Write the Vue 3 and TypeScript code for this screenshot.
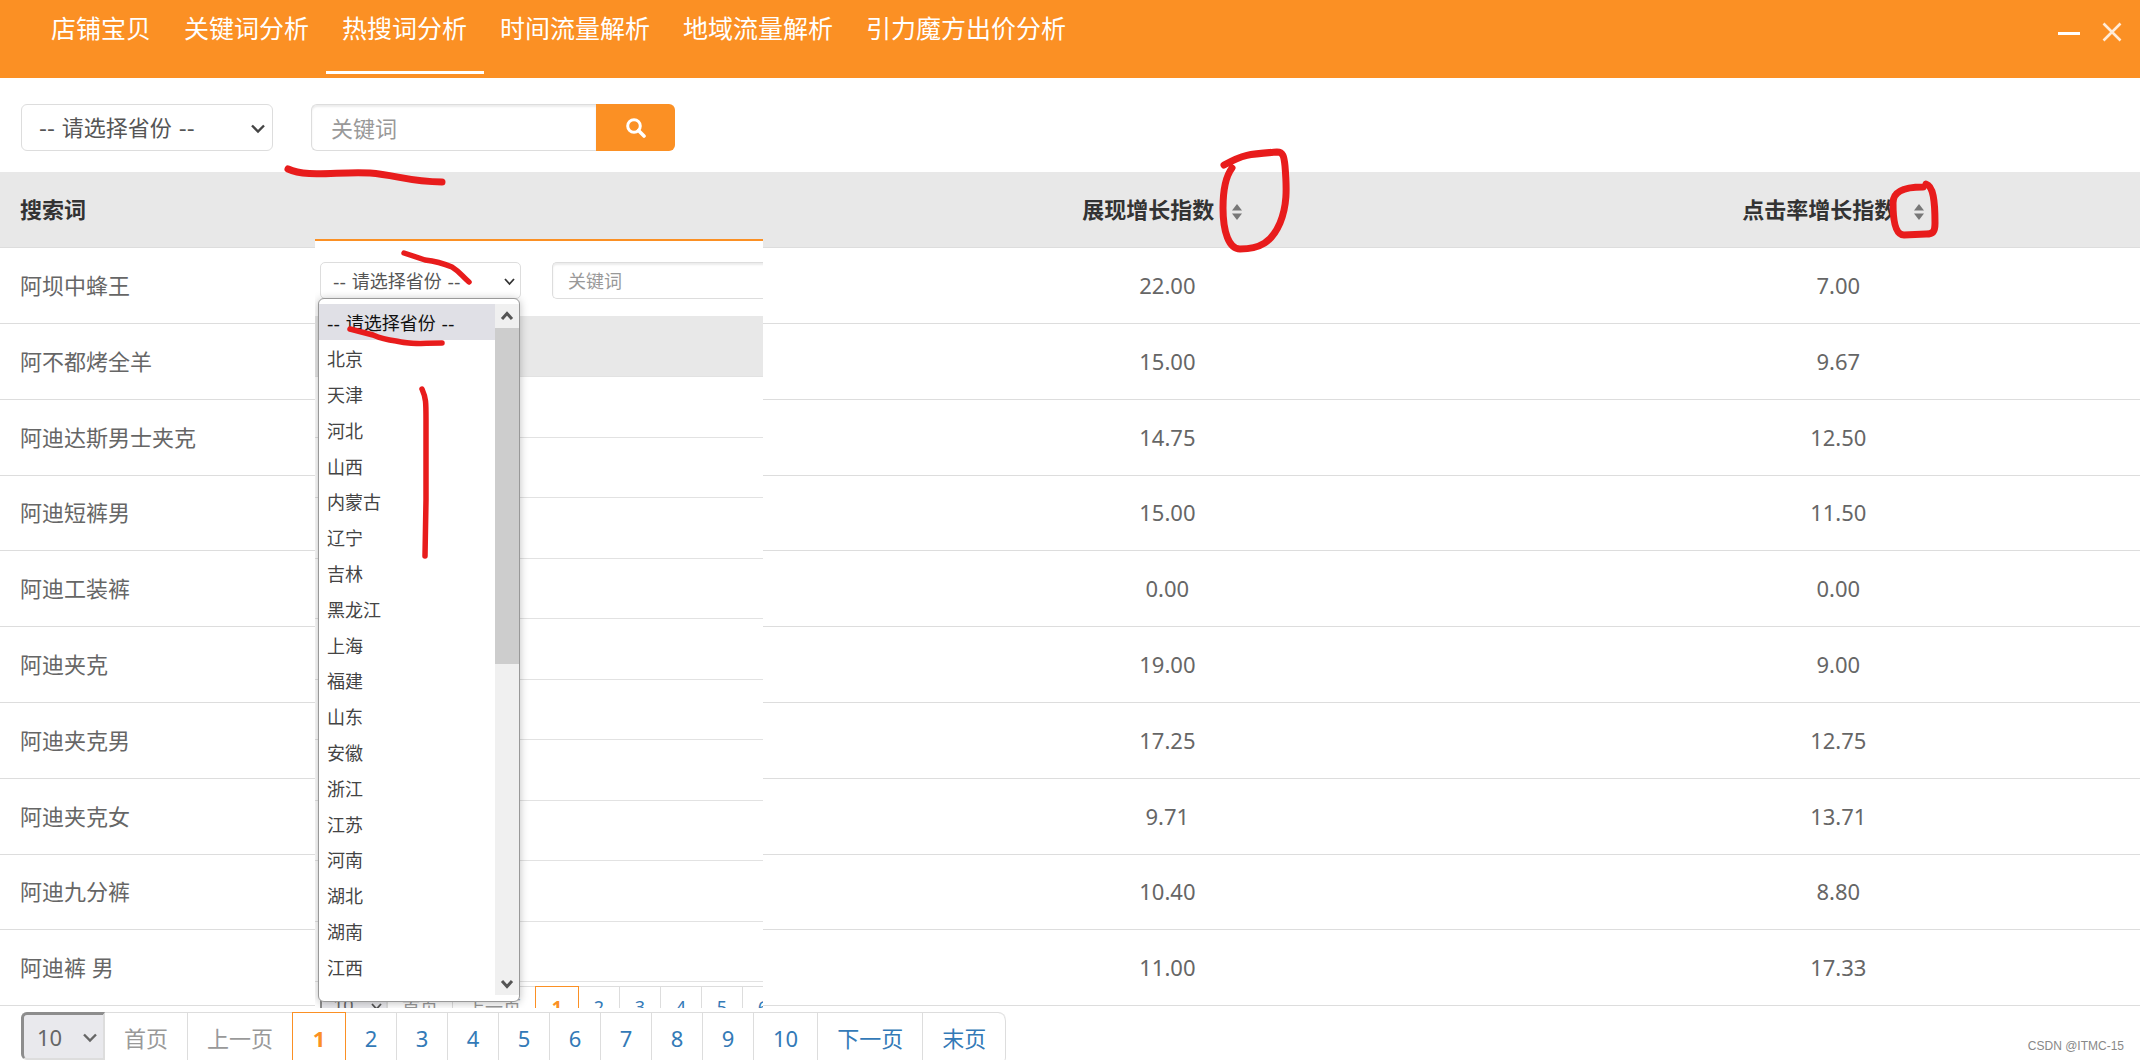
<script setup lang="ts">
import { ref } from 'vue'

interface HotWord {
  word: string
  impression: string
  click: string
}

const tabs: string[] = ['店铺宝贝', '关键词分析', '热搜词分析', '时间流量解析', '地域流量解析', '引力魔方出价分析']
const activeTab = ref('热搜词分析')

const rows: HotWord[] = [
  { word: '阿坝中蜂王', impression: '22.00', click: '7.00' },
  { word: '阿不都烤全羊', impression: '15.00', click: '9.67' },
  { word: '阿迪达斯男士夹克', impression: '14.75', click: '12.50' },
  { word: '阿迪短裤男', impression: '15.00', click: '11.50' },
  { word: '阿迪工装裤', impression: '0.00', click: '0.00' },
  { word: '阿迪夹克', impression: '19.00', click: '9.00' },
  { word: '阿迪夹克男', impression: '17.25', click: '12.75' },
  { word: '阿迪夹克女', impression: '9.71', click: '13.71' },
  { word: '阿迪九分裤', impression: '10.40', click: '8.80' },
  { word: '阿迪裤 男', impression: '11.00', click: '17.33' },
]

const provinces: string[] = [
  '-- 请选择省份 --', '北京', '天津', '河北', '山西', '内蒙古', '辽宁', '吉林', '黑龙江', '上海',
  '福建', '山东', '安徽', '浙江', '江苏', '河南', '湖北', '湖南', '江西', '广东',
]

const pages: number[] = [1, 2, 3, 4, 5, 6, 7, 8, 9, 10]
const province = ref(provinces[0])
const innerProvince = ref(provinces[0])
const keyword = ref('')
const innerKeyword = ref('')
const page = ref(1)
const pageSize = ref('10')
</script>

<template>
  <div class="page">
    <header class="topbar">
      <nav class="tabs">
        <a
          v-for="tab in tabs"
          :key="tab"
          href="#"
          class="tab"
          :class="{ active: tab === activeTab }"
          @click.prevent="activeTab = tab"
        >{{ tab }}</a>
      </nav>
      <div class="window-actions">
        <button type="button" aria-label="最小化">
          <svg width="22" height="20" viewBox="0 0 22 20"><path d="M0 11.5H22" stroke="#fff" stroke-width="3" /></svg>
        </button>
        <button type="button" aria-label="关闭">
          <svg width="20" height="20" viewBox="0 0 20 20"><path d="M1.5 1.5L18.5 18.5M18.5 1.5L1.5 18.5" stroke="#ffecd8" stroke-width="2.6" /></svg>
        </button>
      </div>
    </header>

    <form class="filters" @submit.prevent>
      <div class="select-wrap">
        <select v-model="province" class="province" aria-label="省份">
          <option v-for="p in provinces" :key="p">{{ p }}</option>
        </select>
        <svg class="chevron" width="14" height="10" viewBox="0 0 14 10"><path d="M1 1.5L7 7.5L13 1.5" fill="none" stroke="#444" stroke-width="2.4" /></svg>
      </div>
      <div class="search">
        <input v-model="keyword" type="text" placeholder="关键词" aria-label="关键词" />
        <button type="submit" aria-label="搜索">
          <svg width="20" height="20" viewBox="0 0 20 20">
            <circle cx="8" cy="8" r="6.3" fill="none" stroke="#fff" stroke-width="3" />
            <path d="M12.5 12.5L18 18" stroke="#fff" stroke-width="3.6" stroke-linecap="round" />
          </svg>
        </button>
      </div>
    </form>

    <table class="data">
      <colgroup>
        <col class="col-word" />
        <col class="col-impression" />
        <col class="col-click" />
      </colgroup>
      <thead>
        <tr>
          <th class="word">搜索词</th>
          <th v-for="title in ['展现增长指数', '点击率增长指数']" :key="title">
            <span class="sortable">
              {{ title }}
              <svg width="10" height="22" viewBox="0 0 10 22">
                <path d="M5 6L10 12.5H0Z" fill="#777" />
                <path d="M0 15.5H10L5 22Z" fill="#777" />
              </svg>
            </span>
          </th>
        </tr>
      </thead>
      <tbody>
        <tr v-for="row in rows" :key="row.word">
          <td class="word">{{ row.word }}</td>
          <td>{{ row.impression }}</td>
          <td>{{ row.click }}</td>
        </tr>
      </tbody>
    </table>

    <nav class="pager" aria-label="分页">
      <div class="select-wrap">
        <select v-model="pageSize" class="size" aria-label="每页条数">
          <option>10</option>
          <option>20</option>
        </select>
        <svg class="chevron" width="14" height="10" viewBox="0 0 14 10"><path d="M1 1.5L7 7.5L13 1.5" fill="none" stroke="#666" stroke-width="2.4" /></svg>
      </div>
      <a href="#" class="muted">首页</a>
      <a href="#" class="muted">上一页</a>
      <a
        v-for="n in pages"
        :key="n"
        href="#"
        :class="{ digit: n < 10, current: n === page }"
        @click.prevent="page = n"
      >{{ n }}</a>
      <a href="#">下一页</a>
      <a href="#" class="last">末页</a>
    </nav>

    <section class="inset">
      <div class="filters">
        <div class="select-wrap">
          <select v-model="innerProvince" class="province" aria-label="省份">
            <option v-for="p in provinces" :key="p">{{ p }}</option>
          </select>
          <svg class="chevron" width="11" height="8" viewBox="0 0 11 8"><path d="M1 1L5.5 6L10 1" fill="none" stroke="#333" stroke-width="1.8" /></svg>
        </div>
        <div class="search">
          <input v-model="innerKeyword" type="text" placeholder="关键词" aria-label="关键词" />
        </div>
      </div>
      <div class="lines">
        <div class="line head"></div>
        <div v-for="row in rows" :key="row.word" class="line"></div>
      </div>
      <div class="pager">
        <div class="select-wrap">
          <select v-model="pageSize" class="size" aria-label="每页条数">
            <option>10</option>
            <option>20</option>
          </select>
          <svg class="chevron" width="11" height="8" viewBox="0 0 11 8"><path d="M1 1L5.5 6L10 1" fill="none" stroke="#555" stroke-width="1.8" /></svg>
        </div>
        <a href="#" class="muted">首页</a>
        <a href="#" class="muted">上一页</a>
        <a
          v-for="n in pages.slice(0, 6)"
          :key="n"
          href="#"
          class="digit"
          :class="{ current: n === page }"
          @click.prevent="page = n"
        >{{ n }}</a>
      </div>

      <div class="dropdown">
        <ul role="listbox" aria-label="省份">
          <li
            v-for="p in provinces"
            :key="p"
            role="option"
            :aria-selected="p === innerProvince"
            :class="{ selected: p === innerProvince }"
            @click="innerProvince = p"
          >{{ p }}</li>
        </ul>
        <div class="scrollbar">
          <svg width="24" height="24" viewBox="0 0 24 24"><path d="M7 15L12 9.5L17 15" fill="none" stroke="#555" stroke-width="3" /></svg>
          <div class="thumb"></div>
          <svg width="24" height="24" viewBox="0 0 24 24"><path d="M7 10L12 15.5L17 10" fill="none" stroke="#555" stroke-width="3" /></svg>
        </div>
      </div>
    </section>

    <svg class="marks" viewBox="0 0 2140 1060" aria-hidden="true">
      <g fill="none" stroke="#e81c1c" stroke-linecap="round" stroke-linejoin="round">
        <path stroke-width="7" d="M288 169C306 178 340 171 370 173C396 175 410 182 442 182" />
        <path stroke-width="7" d="M1224 165C1244 154 1250 154 1277 152C1283 152 1284 156 1285 166C1287 190 1287 206 1280 223C1272 242 1260 249 1240 249C1229 249 1223 232 1223 208C1223 190 1226 176 1232 168" />
        <path stroke-width="7" d="M1923 187C1902 187 1893 192 1893 203C1893 226 1897 235 1904 235L1926 234C1933 234 1935 232 1935 223C1935 200 1933 186 1926 184" />
        <path stroke-width="5.5" d="M404 253L425 260C434 261 440 262 452 267C460 272 462 276 469 282" />
        <path stroke-width="5.5" d="M350 329L373 335C382 339 388 340 396 341C412 345 420 343 442 343" />
        <path stroke-width="5.5" d="M422 389C426 398 426 402 426 420V500L425 556" />
      </g>
    </svg>
    <p class="watermark">CSDN @ITMC-15</p>
  </div>
</template>

<style>
body {
  margin: 0;
  overflow: hidden;
}
</style>

<style scoped>
* {
  box-sizing: border-box;
}

.page {
  position: relative;
  height: 100vh;
  overflow: hidden;
  background: #fff;
  color: #666;
  font: 22px/32px 'Noto Sans', 'Noto Sans CJK SC', sans-serif;
}

a {
  text-decoration: none;
}

button,
select,
input {
  margin: 0;
  padding: 0;
  border: 0;
  background: none;
  color: inherit;
  font: inherit;
}

svg {
  display: block;
}

.topbar {
  display: flex;
  justify-content: space-between;
  height: 78px;
  padding: 0 18px 0 35px;
  background: #fb9024;
}

.tabs {
  display: flex;
}

.tab {
  height: 74px;
  padding: 12px 17px 0 16px;
  border-bottom: 3px solid transparent;
  color: #fff;
  font-size: 25px;
  white-space: nowrap;
}

.tab.active {
  border-bottom-color: #fff;
}

.window-actions {
  display: flex;
  gap: 22px;
  align-items: flex-start;
  padding-top: 22px;
}

.filters {
  display: flex;
  gap: 38px;
  padding: 26px 21px 21px;
}

.select-wrap {
  position: relative;
}

.province {
  appearance: none;
  display: block;
  width: 252px;
  height: 47px;
  padding: 2px 0 0 17px;
  border: 1px solid #ddd;
  border-radius: 6px;
  background: #fff;
  color: #555;
  font-family: 'DejaVu Sans', 'Noto Sans CJK SC', sans-serif;
}

.chevron {
  position: absolute;
  top: 20px;
  right: 8px;
  pointer-events: none;
}

.search {
  display: flex;
}

.search input {
  width: 285px;
  height: 47px;
  padding-left: 19px;
  border: 1px solid #ddd;
  border-right: 0;
  border-radius: 6px 0 0 6px;
  box-shadow: inset 0 2px 2px rgba(0, 0, 0, 0.08);
}

.search input::placeholder {
  color: #999;
}

.search button {
  display: flex;
  align-items: center;
  justify-content: center;
  width: 79px;
  height: 47px;
  border-radius: 0 6px 6px 0;
  background: #fb9024;
}

.data {
  width: 100%;
  border-spacing: 0;
  table-layout: fixed;
}

.col-word {
  width: 37.3%;
}

.col-impression {
  width: 34.5%;
}

.col-click {
  width: 28.2%;
}

.data tr {
  height: 76px;
}

.data tbody tr:nth-child(5n + 4) {
  height: 75px;
}

.data th,
.data td {
  padding: 0 0 2px;
  border-bottom: 1px solid #ddd;
  text-align: center;
}

.data th {
  background: #e8e8e8;
  color: #333;
}

.data .word {
  padding-left: 20px;
  text-align: left;
}

.sortable {
  display: inline-flex;
  gap: 18px;
  align-items: center;
  padding-right: 10px;
}

.pager {
  display: flex;
  width: max-content;
  margin: 6px 0 0 21px;
  border-top: 1px solid #ddd;
  border-radius: 6px 8px 0 0;
}

.size {
  appearance: none;
  display: block;
  width: 84px;
  height: 48px;
  margin-top: -1px;
  padding-left: 13px;
  border: 2px solid #ddd;
  border-top: 3px solid #8d8d8d;
  border-left: 3px solid #8d8d8d;
  border-radius: 6px 0 0 6px;
  background: #e9e9ed;
}

.pager a {
  height: 52px;
  padding: 9px 19px;
  border-right: 1px solid #ddd;
  color: #337ab7;
  text-align: center;
}

.pager a.digit {
  width: 51px;
  padding: 9px 0;
}

.pager a.muted {
  color: #999;
}

.pager a.current {
  width: 54px;
  margin: -1px 0 0 -1px;
  border: 1px solid #fb9024;
  color: #fb9024;
  font-weight: 700;
}

.pager a.last {
  border-radius: 0 8px 8px 0;
}

.inset {
  position: absolute;
  top: 239px;
  left: 315px;
  width: 448px;
  height: 769px;
  overflow: hidden;
  border-top: 2px solid #fb9024;
  background: #fff;
  font-size: 18px;
  line-height: 26px;
}

.inset .filters {
  gap: 31px;
  padding: 21px 0 17px 5px;
}

.inset .province {
  width: 201px;
  height: 37px;
  padding-left: 12px;
  border-radius: 5px;
}

.inset .chevron {
  top: 16px;
  right: 6px;
}

.inset .search input {
  height: 37px;
  padding-left: 15px;
  border-radius: 5px;
}

.line {
  height: 61px;
  border-bottom: 1px solid #e2e2e2;
}

.line:nth-child(2n + 3) {
  height: 60px;
}

.line.head {
  background: #e8e8e8;
}

.inset .pager {
  margin: 4px 0 0 5px;
}

.inset .size {
  width: 68px;
  height: 38px;
  padding-left: 11px;
  border-width: 2px;
}

.inset .pager a {
  height: 40px;
  padding: 7px 14px;
}

.inset .pager a.digit {
  width: 41px;
  padding: 7px 0;
}

.inset .pager a.current {
  width: 44px;
}

.dropdown {
  position: absolute;
  top: 57px;
  left: 3px;
  display: flex;
  width: 202px;
  height: 704px;
  padding: 5px 0 6px;
  border: 1px solid #999;
  border-radius: 6px;
  background: #fff;
  box-shadow: 0 1px 8px rgba(0, 0, 0, 0.25);
  color: #444;
  font-family: 'DejaVu Sans', 'Noto Sans CJK SC', sans-serif;
}

.dropdown ul {
  flex: 1;
  margin: 0;
  padding: 0;
  overflow: hidden;
  list-style: none;
}

.dropdown li {
  height: 36px;
  padding: 7px 0 0 8px;
}

.dropdown li:nth-child(5n) {
  height: 35px;
}

.dropdown li.selected {
  background: #e0e0e6;
  color: #111;
}

.scrollbar {
  display: flex;
  flex-direction: column;
  justify-content: space-between;
  width: 24px;
  background: #f0f0f0;
}

.thumb {
  height: 336px;
  margin-bottom: auto;
  background: #cdcdcd;
}

.marks {
  position: absolute;
  top: 0;
  left: 0;
  width: 100%;
  pointer-events: none;
}

.watermark {
  position: absolute;
  right: 16px;
  bottom: 6px;
  margin: 0;
  color: #888;
  font: 12px/16px 'Liberation Sans', sans-serif;
}
</style>
